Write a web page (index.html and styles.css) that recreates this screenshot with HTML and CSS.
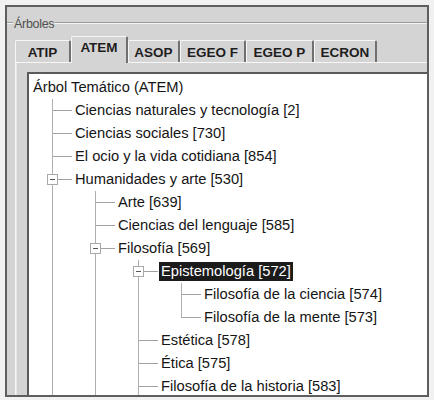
FILE: index.html
```html
<!DOCTYPE html>
<html lang="es">
<head>
<meta charset="utf-8">
<title>Árboles</title>
<link rel="stylesheet" href="styles.css">
</head>
<body>
<div class="frame">
  <div class="group-head">
    <span class="gline gline-short"></span>
    <span class="glabel">Árboles</span>
    <span class="gline gline-fill"></span>
  </div>
  <div class="tabs">
    <div class="tab w-atip">ATIP</div>
    <div class="tab tab-active w-atem">ATEM</div>
    <div class="tab w-asop">ASOP</div>
    <div class="tab w-egeof">EGEO F</div>
    <div class="tab w-egeop">EGEO P</div>
    <div class="tab w-ecron">ECRON</div>
  </div>
  <div class="panel">
    <div class="tree">
      <div class="row root"><span class="txt">Árbol Temático (ATEM)</span></div>
      <div class="row"><span class="c tee"></span><span class="txt">Ciencias naturales y tecnología [2]</span></div>
      <div class="row"><span class="c tee"></span><span class="txt">Ciencias sociales [730]</span></div>
      <div class="row"><span class="c tee"></span><span class="txt">El ocio y la vida cotidiana [854]</span></div>
      <div class="row"><span class="c tee"><span class="box"></span></span><span class="txt">Humanidades y arte [530]</span></div>
      <div class="row"><span class="c pipe"></span><span class="c tee"></span><span class="txt">Arte [639]</span></div>
      <div class="row"><span class="c pipe"></span><span class="c tee"></span><span class="txt">Ciencias del lenguaje [585]</span></div>
      <div class="row"><span class="c pipe"></span><span class="c tee"><span class="box"></span></span><span class="txt">Filosofía [569]</span></div>
      <div class="row"><span class="c pipe"></span><span class="c pipe"></span><span class="c tee"><span class="box"></span></span><span class="txt sel">Epistemología [572]</span></div>
      <div class="row"><span class="c pipe"></span><span class="c pipe"></span><span class="c pipe"></span><span class="c tee"></span><span class="txt">Filosofía de la ciencia [574]</span></div>
      <div class="row"><span class="c pipe"></span><span class="c pipe"></span><span class="c pipe"></span><span class="c ell"></span><span class="txt">Filosofía de la mente [573]</span></div>
      <div class="row"><span class="c pipe"></span><span class="c pipe"></span><span class="c tee"></span><span class="txt">Estética [578]</span></div>
      <div class="row"><span class="c pipe"></span><span class="c pipe"></span><span class="c tee"></span><span class="txt">Ética [575]</span></div>
      <div class="row"><span class="c pipe"></span><span class="c pipe"></span><span class="c tee"></span><span class="txt">Filosofía de la historia [583]</span></div>
    </div>
  </div>
</div>
</body>
</html>
```

FILE: styles.css
```css
html, body {
  margin: 0;
  padding: 0;
  background: #f1f1f1;
}

.frame {
  box-sizing: border-box;
  margin: 5px 0 0 5px;
  width: 424px;
  height: 392px;
  border: 2px solid #5e5e5e;
  background: #d4d4d4;
  overflow: hidden;
  font-family: "Liberation Sans", Arial, sans-serif;
}

/* group box header */
.group-head {
  display: flex;
  align-items: center;
  height: 18px;
  padding-top: 7px;
}
.gline {
  height: 0;
  border-top: 1px solid #9c9c9c;
  border-bottom: 1px solid #f4f4f4;
}
.gline-short { width: 6px; flex: none; }
.gline-fill { flex: 1; }
.glabel {
  font-size: 12.5px;
  line-height: 14px;
  color: #505050;
  padding: 1px 1px 0 1px;
  letter-spacing: -0.3px;
}

/* tabs */
.tabs {
  display: flex;
  align-items: flex-end;
  margin-top: 4px;
  padding-left: 8px;
  height: 26px;
}
.tab {
  box-sizing: border-box;
  height: 22px;
  border-top: 1px solid #f6f6f6;
  border-left: 1px solid #f6f6f6;
  border-right: 2px solid #707070;
  border-radius: 2px 2px 0 0;
  display: flex;
  align-items: center;
  justify-content: center;
  font-size: 13.5px;
  font-weight: bold;
  color: #1e1e1e;
  padding-top: 1px;
}
.tab-active {
  padding-top: 0;
  padding-bottom: 5px;
  background: #d4d4d4;
  position: relative;
  z-index: 1;
  margin-bottom: -1px;
  height: 27px;
}
.w-atip { width: 56px; }
.w-atem { width: 57px; }
.w-asop { width: 52px; }
.w-egeof { width: 66px; }
.w-egeop { width: 68px; }
.w-ecron { width: 63px; }

/* panel */
.panel {
  margin-left: 8px;
  border-top: 1px solid #f6f6f6;
  border-left: 1px solid #f6f6f6;
  box-shadow: inset 1px 0 0 #e6e6e6;
  padding: 9px 0 0 11px;
  height: 400px;
}

.tree {
  background: #ffffff;
  border-top: 2px solid #5a5a5a;
  border-left: 2px solid #5a5a5a;
  margin-right: -4px;
  padding: 2px 0 0 1px;
  height: 400px;
  font-size: 14.7px;
  color: #151515;
}

.row {
  display: flex;
  align-items: center;
  height: 23px;
  white-space: nowrap;
}
.root .txt { margin-left: 1px; }

.txt {
  padding: 0 2px;
  line-height: 19px;
}
.txt.sel {
  background: #1b1b1b;
  color: #ffffff;
}

.c {
  flex: none;
  width: 43px;
  height: 23px;
  display: flex;
  align-items: center;
}
.pipe {
  background: linear-gradient(#b0b0b0, #b0b0b0) 22px 0 / 1px 100% no-repeat;
}
.tee {
  background:
    linear-gradient(#b0b0b0, #b0b0b0) 22px 0 / 1px 100% no-repeat,
    linear-gradient(#a2a2a2, #a2a2a2) 22px 11px / 20px 1px no-repeat;
}
.ell {
  background:
    linear-gradient(#b0b0b0, #b0b0b0) 22px 0 / 1px 12px no-repeat,
    linear-gradient(#a2a2a2, #a2a2a2) 22px 11px / 20px 1px no-repeat;
}
.box {
  box-sizing: border-box;
  width: 11px;
  height: 11px;
  margin-left: 17px;
  margin-top: -1px;
  border: 1px solid #a8a8a8;
  background:
    linear-gradient(#555555, #555555) 2px 4px / 5px 1px no-repeat,
    #ffffff;
}
```
